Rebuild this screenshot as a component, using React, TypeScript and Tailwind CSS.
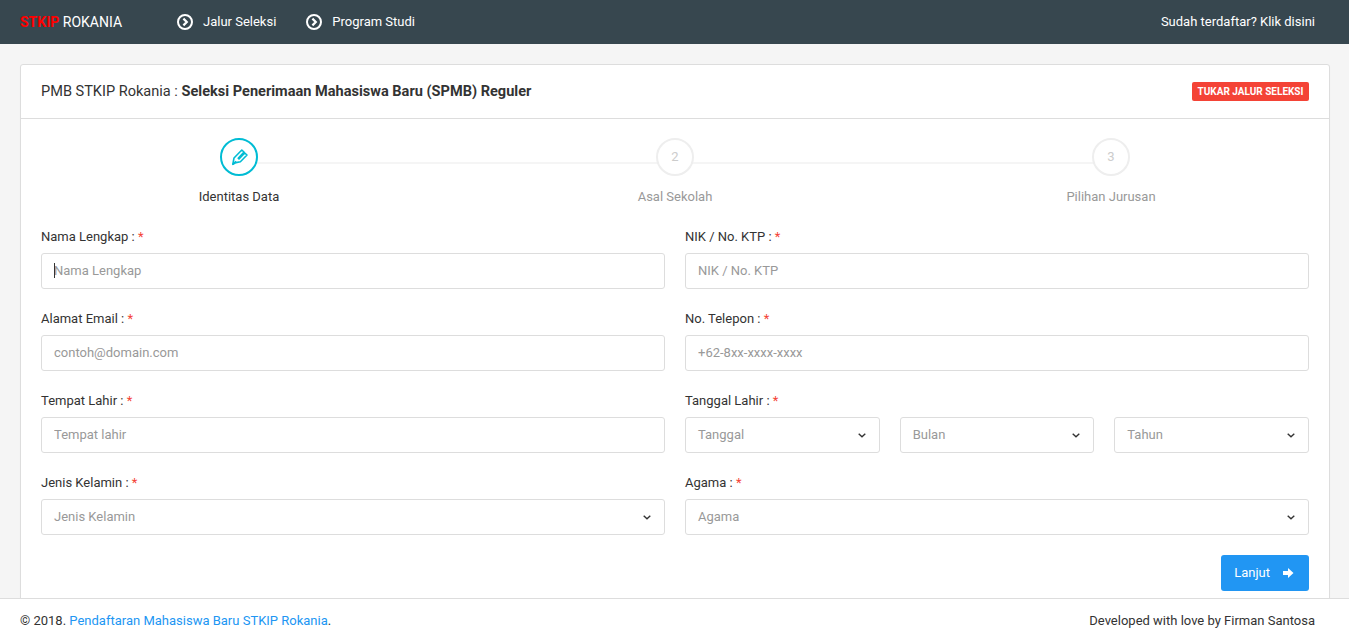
import { ReactNode } from "react";

function CircleRight() {
  return (
    <svg width="16" height="16" viewBox="0 0 16 16" fill="none" className="shrink-0">
      <circle cx="8" cy="8" r="7" stroke="white" strokeWidth="2" />
      <path d="M6.4 4.6 9.8 8l-3.4 3.4" stroke="white" strokeWidth="2.2" />
    </svg>
  );
}

function Chevron() {
  return (
    <svg width="8" height="5" viewBox="0 0 8 5" fill="none" className="shrink-0">
      <path d="M.7.8 4 3.8 7.3.8" stroke="#333333" strokeWidth="1.4" />
    </svg>
  );
}

function Label({ text }: { text: string }) {
  return (
    <label className="block h-[20px] mb-[6px] leading-[20px] text-[#333333]">
      {text} : <span className="text-[#f44336]">*</span>
    </label>
  );
}

function Input({ placeholder, caret }: { placeholder: string; caret?: boolean }) {
  return (
    <div className="relative">
      <input
        type="text"
        placeholder={placeholder}
        className="block w-full h-[36px] px-[12px] pb-[2px] bg-white border border-[#dddddd] rounded-[3px] outline-none text-[13px] text-[#333333] placeholder:text-[#999999]"
      />
      {caret && <span className="absolute left-[13px] top-[10px] w-px h-[15px] bg-[#333333]" />}
    </div>
  );
}

function Select({ placeholder }: { placeholder: string }) {
  return (
    <div className="flex items-center justify-between w-full h-[36px] pl-[12px] pr-[13px] bg-white border border-[#dddddd] rounded-[3px] text-[#999999]">
      <span>{placeholder}</span>
      <Chevron />
    </div>
  );
}

function Field({ label, children }: { label: string; children: ReactNode }) {
  return (
    <div>
      <Label text={label} />
      {children}
    </div>
  );
}

function Step({ active, number, title, last }: { active?: boolean; number?: number; title: string; last?: boolean }) {
  return (
    <div className="relative flex flex-col items-center flex-1">
      {!last && <div className="absolute left-1/2 top-[24px] w-full h-[2px] bg-[#f5f5f5]" />}
      <div
        className={
          active
            ? "relative z-10 flex items-center justify-center w-[38px] h-[38px] rounded-full bg-white border-2 border-[#00bcd4]"
            : "relative z-10 flex items-center justify-center w-[38px] h-[38px] rounded-full bg-white border-2 border-[#eeeeee] text-[#cccccc]"
        }
      >
        {active ? (
          <svg width="18" height="18" viewBox="0 0 18 18" fill="none" className="ml-px">
            <path d="M1.8 16.4 3 10 10.8 2 13 4 7.2 10.2 8 11 13.8 5 16 7 9.4 13.8 5 14.6Z" stroke="#00bcd4" strokeWidth="1.6" strokeLinejoin="round" />
            <path d="M1.8 16.4 5 13.2" stroke="#00bcd4" strokeWidth="1.6" />
          </svg>
        ) : (
          number
        )}
      </div>
      <div className={active ? "mt-[11px] leading-[20px] text-[#333333]" : "mt-[11px] leading-[20px] text-[#999999]"}>{title}</div>
    </div>
  );
}

export default function App() {
  return (
    <div className="flex flex-col h-screen overflow-hidden bg-[#f5f5f5] text-[13px] text-[#333333] font-['Roboto',sans-serif]">
      <header className="shrink-0 flex items-center justify-between h-[44px] pl-[20px] pr-[34px] bg-[#37474f] text-white">
        <div className="flex items-center">
          <a className="w-[157px] text-[14px] leading-[20px]">
            <span className="font-bold text-[#ff0000]">STKIP</span> ROKANIA
          </a>
          <a className="flex items-center gap-[10px] mr-[30px]">
            <CircleRight />
            Jalur Seleksi
          </a>
          <a className="flex items-center gap-[10px]">
            <CircleRight />
            Program Studi
          </a>
        </div>
        <a>Sudah terdaftar? Klik disini</a>
      </header>

      <main className="flex-1 min-h-0 overflow-hidden pl-[20px] pr-[19px] pt-[20px]">
        <div className="bg-white border border-[#dddddd] rounded-[3px] shadow-[0_1px_1px_rgba(0,0,0,0.05)]">
          <div className="flex items-center justify-between h-[54px] px-[20px] border-b border-[#dddddd]">
            <h6 className="text-[14.55px] leading-[20px]">
              PMB STKIP Rokania : <span className="font-bold">Seleksi Penerimaan Mahasiswa Baru (SPMB) Reguler</span>
            </h6>
            <button className="w-[117px] h-[19px] bg-[#f44336] rounded-[2px] text-white text-[10px] font-bold leading-[19px]">
              TUKAR JALUR SELEKSI
            </button>
          </div>

          <div className="flex pt-[19px] pb-[20px]">
            <Step active title="Identitas Data" />
            <Step number={2} title="Asal Sekolah" />
            <Step number={3} title="Pilihan Jurusan" last />
          </div>

          <div className="grid grid-cols-2 gap-x-[20px] gap-y-[20px] px-[20px]">
            <Field label="Nama Lengkap">
              <Input placeholder="Nama Lengkap" caret />
            </Field>
            <Field label="NIK / No. KTP">
              <Input placeholder="NIK / No. KTP" />
            </Field>
            <Field label="Alamat Email">
              <Input placeholder="contoh@domain.com" />
            </Field>
            <Field label="No. Telepon">
              <Input placeholder="+62-8xx-xxxx-xxxx" />
            </Field>
            <Field label="Tempat Lahir">
              <Input placeholder="Tempat lahir" />
            </Field>
            <Field label="Tanggal Lahir">
              <div className="grid grid-cols-3 gap-[20px]">
                <Select placeholder="Tanggal" />
                <Select placeholder="Bulan" />
                <Select placeholder="Tahun" />
              </div>
            </Field>
            <Field label="Jenis Kelamin">
              <Select placeholder="Jenis Kelamin" />
            </Field>
            <Field label="Agama">
              <Select placeholder="Agama" />
            </Field>
          </div>

          <div className="flex justify-end px-[20px] pt-[20px] pb-[20px]">
            <button className="flex items-center gap-[13px] h-[36px] pl-[13px] pr-[15px] bg-[#2196f3] rounded-[3px] text-white">
              Lanjut
              <svg width="11" height="10" viewBox="0 0 11 10" fill="white">
                <path d="M0 3H5V0L10.5 5 5 10V7H0Z" />
              </svg>
            </button>
          </div>
        </div>
      </main>

      <footer className="shrink-0 flex items-center justify-between h-[43px] pt-[2px] pl-[20px] pr-[34px] bg-white border-t border-[#dddddd]">
        <div>
          © 2018. <a className="text-[#2196f3]">Pendaftaran Mahasiswa Baru STKIP Rokania</a>.
        </div>
        <div>Developed with love by Firman Santosa</div>
      </footer>
    </div>
  );
}
